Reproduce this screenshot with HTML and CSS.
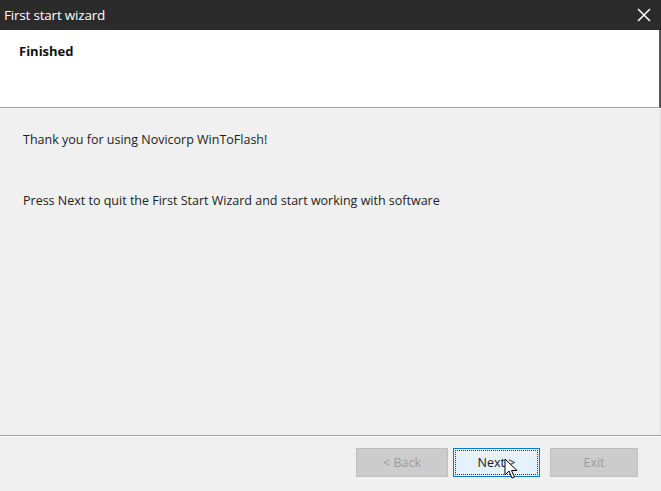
FILE: index.html
```html
<!DOCTYPE html>
<html>
<head>
<meta charset="utf-8">
<link rel="stylesheet" href="styles.css">
</head>
<body>
<div class="window">
  <div class="titlebar">
    <span class="title">First start wizard</span>
    <span class="close">
      <svg width="14" height="14" viewBox="0 0 14 14"><path d="M1 1 L13 13 M13 1 L1 13" stroke="#fff" stroke-width="1.5" fill="none"/></svg>
    </span>
  </div>
  <div class="header">
    <div class="heading">Finished</div>
  </div>
  <div class="content">
    <p class="line first">Thank you for using Novicorp WinToFlash!</p>
    <p class="line second">Press Next to quit the First Start Wizard and start working with software</p>
  </div>
  <div class="footer">
    <button class="btn disabled back">&lt; Back</button>
    <button class="btn primary">Next &gt;
      <svg class="cursor" width="14" height="22" viewBox="0 0 14 22"><path d="M1 1 L1 17 L5 13 L8 20 L10.5 19 L7.5 12.5 L13 12.5 Z" fill="#fff" stroke="#000" stroke-width="1" stroke-linejoin="round"/></svg>
    </button>
    <button class="btn disabled exit">Exit</button>
  </div>
</div>
</body>
</html>
```

FILE: styles.css
```css
html, body {
  margin: 0;
  padding: 0;
  width: 661px;
  height: 491px;
  overflow: hidden;
  background: #f0f0f0;
}
.window {
  width: 661px;
  height: 491px;
  display: flex;
  flex-direction: column;
  font-family: "Open Sans", "Noto Sans", sans-serif;
  font-size: 12.4px;
  color: #1a1a1a;
  box-sizing: border-box;
}
.titlebar {
  height: 30px;
  background: #2b2b2b;
  display: flex;
  align-items: center;
  justify-content: space-between;
  padding: 0 10px 0 4px;
  flex: none;
}
.title {
  color: #ffffff;
  font-size: 13.5px;
  letter-spacing: -0.2px;
}
.close {
  display: flex;
  align-items: center;
  width: 14px;
  height: 14px;
}
.header {
  height: 78px;
  background: #ffffff;
  border-bottom: 1px solid #a0a0a0;
  border-right: 2px solid #555;
  padding: 12px 0 0 19px;
  box-sizing: border-box;
  flex: none;
}
.heading {
  font-weight: bold;
  font-size: 13px;
  color: #111;
}
.content {
  flex: 1;
  padding: 0 0 0 23px;
  border-top: 1px solid #fafafa;
  border-right: 1px solid #e0e0e0;
}
.line {
  margin: 0;
  font-size: 12.5px;
  color: #222;
}
.first {
  margin-top: 22px;
}
.second {
  margin-top: 44px;
}
.footer {
  height: 56px;
  flex: none;
  border-top: 1px solid #a0a0a0;
  box-shadow: inset 0 1px 0 #ffffff;
  display: flex;
  justify-content: flex-end;
  align-items: flex-start;
  padding: 12px 23px 0 0;
  box-sizing: border-box;
}
.btn {
  width: 92px;
  height: 29px;
  font-family: "Open Sans", "Noto Sans", sans-serif;
  font-size: 12.5px;
  background: #cccccc;
  border: 1px solid #bfbfbf;
  color: #9d9d9d;
  padding: 0;
  margin: 0;
}
.btn.exit {
  width: 88px;
}
.btn.primary {
  position: relative;
  width: 87px;
  background: #e5f1fb;
  border: 1px solid #0078d7;
  color: #1a1a1a;
  outline: 1px dotted #333;
  outline-offset: -3px;
  margin: 0 10px 0 5px;
}
.cursor {
  position: absolute;
  left: 50px;
  top: 9px;
}
```
